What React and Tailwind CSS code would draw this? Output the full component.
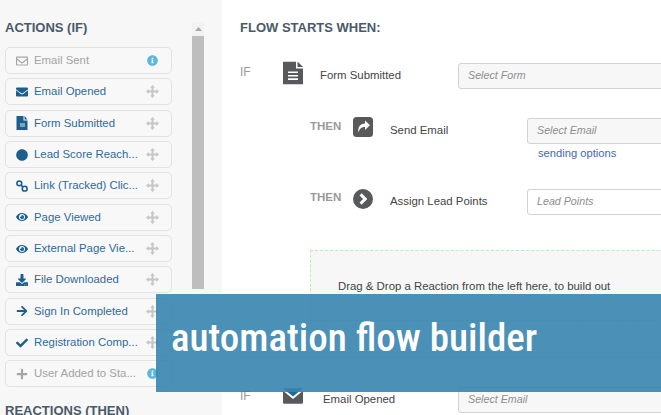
import React from "react";
import { FaRegEnvelope, FaEnvelope, FaCircle, FaEye, FaDownload, FaArrowRight, FaCheck, FaPlus, FaInfoCircle } from "react-icons/fa";

// glyphs that the icon sets only get roughly right
function DocIcon({ className }) {
  return (
    <svg viewBox="0 0 20 23" className={className}>
      <path d="M0 0H13V7H20V23H0Z" fill="currentColor" />
      <path d="M14.5 0L20 5.5H14.5Z" fill="currentColor" />
      <path d="M5 10H15V11.6H5ZM5 13.4H15V15H5ZM5 16.8H15V18.4H5Z" fill="#fff" />
    </svg>
  );
}

function SmallDocIcon() {
  return (
    <svg viewBox="0 0 12 14" className="h-[14px] w-[12px]">
      <path d="M0.5 0H7.5V4.5H11.5V14H0.5Z" fill="currentColor" />
      <path d="M8.5 0L11.5 3.5H8.5Z" fill="currentColor" />
      <path d="M4 7H9V11H4Z" fill="#7fa3bf" />
    </svg>
  );
}

function ChainIcon() {
  return (
    <svg viewBox="0 0 13 13" className="h-[12px] w-[12px]" fill="none" stroke="currentColor" strokeWidth="1.7">
      <circle cx="3.6" cy="3.6" r="2.6" />
      <circle cx="9.4" cy="9.4" r="2.6" />
      <path d="M5.5 5.5L7.5 7.5" />
    </svg>
  );
}

function MoveIcon() {
  return (
    <svg viewBox="0 0 14 14" className="h-[13px] w-[13px]" fill="currentColor">
      <path d="M7 0L9.6 2.9H8.1V5.9H11.1V4.4L14 7L11.1 9.6V8.1H8.1V11.1H9.6L7 14L4.4 11.1H5.9V8.1H2.9V9.6L0 7L2.9 4.4V5.9H5.9V2.9H4.4Z" />
    </svg>
  );
}

function ShareIcon({ className }) {
  return (
    <svg viewBox="0 0 20 20" className={className}>
      <rect width="20" height="20" rx="3.5" fill="currentColor" />
      <path d="M12 3.5L17 8.3L12 13V10C8.5 10 6.6 11.5 5.6 15.5C4.5 10.5 6.8 6.6 12 6.4Z" fill="#fff" />
    </svg>
  );
}

function ChevronCircleIcon({ className }) {
  return (
    <svg viewBox="0 0 20 20" className={className}>
      <circle cx="10" cy="10" r="10" fill="currentColor" />
      <path d="M7.6 5.4L12.2 10L7.6 14.6" fill="none" stroke="#fff" strokeWidth="3" />
    </svg>
  );
}

function BigEnvelopeIcon({ className }) {
  return (
    <svg viewBox="0 0 23 18" className={className}>
      <path d="M0 0H23L11.5 9.5Z" fill="#1f6a99" />
      <path d="M0 3L11.5 12.5L23 3V16.5Q23 18 21.5 18H1.5Q0 18 0 16.5Z" fill="currentColor" />
    </svg>
  );
}

const actions = [
  { label: "Email Sent", icon: <FaRegEnvelope />, off: true },
  { label: "Email Opened", icon: <FaEnvelope /> },
  { label: "Form Submitted", icon: <SmallDocIcon /> },
  { label: "Lead Score Reach...", icon: <FaCircle /> },
  { label: "Link (Tracked) Clic...", icon: <ChainIcon /> },
  { label: "Page Viewed", icon: <FaEye /> },
  { label: "External Page Vie...", icon: <FaEye /> },
  { label: "File Downloaded", icon: <FaDownload /> },
  { label: "Sign In Completed", icon: <FaArrowRight /> },
  { label: "Registration Comp...", icon: <FaCheck /> },
  { label: "User Added to Sta...", icon: <FaPlus />, off: true },
];

function ActionRow({ label, icon, off }) {
  return (
    <div className="flex h-[27px] items-center rounded-[5px] border border-[#e2e2e2] bg-[#f8f8f8] pl-[10px] pr-[12px]">
      <span className={`flex w-[18px] shrink-0 justify-start text-[12px] ${off ? "text-[#a5a5a5]" : "text-[#1c5f8e]"}`}>
        {icon}
      </span>
      <span className={`flex-1 whitespace-nowrap text-[11.4px] ${off ? "text-[#a3a3a3]" : "text-[#2f6a99]"}`}>{label}</span>
      {off ? (
        <FaInfoCircle className="mr-[1px] text-[11px] text-[#5bb8dc]" />
      ) : (
        <span className="text-[#c6c6c6]">
          <MoveIcon />
        </span>
      )}
    </div>
  );
}

function SelectBox({ text, white }) {
  return (
    <div
      className={`flex h-[26px] w-[300px] shrink-0 items-center rounded-[3px] border border-[#d2d2d2] pb-[2px] pl-[9px] text-[10.7px] italic text-[#8e8e8e] ${
        white ? "bg-white" : "bg-[#f7f7f7]"
      }`}
    >
      {text}
    </div>
  );
}

function FlowRow({ tag, icon, label, labelWidth, tagClass, select, className }) {
  return (
    <div className={`flex h-[26px] items-center ${className}`}>
      <span className={`w-[43px] shrink-0 -translate-y-[4px] ${tagClass}`}>{tag}</span>
      <span className="flex w-[20px] shrink-0 justify-start text-[#58595b]">{icon}</span>
      <span className={`ml-[17px] shrink-0 whitespace-nowrap text-[11.4px] text-[#444] ${labelWidth}`}>{label}</span>
      {select}
    </div>
  );
}

export default function App() {
  return (
    <div className="relative flex h-[415px] w-[661px] overflow-hidden bg-white font-['Liberation_Sans',sans-serif]">
      {/* Left panel */}
      <aside className="flex h-full w-[222px] shrink-0 bg-[#f7f7f7]">
        <div className="w-[172px] shrink-0 pl-[5px] pt-[19px]">
          <h2 className="h-[28px] whitespace-nowrap text-[13px] font-bold leading-[17px] text-[#4a5a6a]">ACTIONS (IF)</h2>
          <div className="flex w-[167px] flex-col gap-[4.35px]">
            {actions.map((a) => (
              <ActionRow key={a.label} {...a} />
            ))}
          </div>
          <h2 className="mt-[15px] whitespace-nowrap text-[13px] font-bold leading-[17px] text-[#4a5a6a]">REACTIONS (THEN)</h2>
        </div>
        {/* Scrollbar */}
        <div className="ml-[20px] mt-[22px] flex h-[267px] w-[12px] flex-col">
          <div className="flex h-[14px] items-center justify-center bg-[#f2f2f2]">
            <svg width="7" height="4" viewBox="0 0 7 4"><path d="M3.5 0L7 4H0z" fill="#a8a8a8" /></svg>
          </div>
          <div className="flex-1 bg-[#bebebe]" />
        </div>
      </aside>

      {/* Flow builder */}
      <main className="min-w-0 flex-1 pl-[18px] pt-[19px]">
        <h2 className="whitespace-nowrap text-[13px] font-bold leading-[17px] text-[#4a5a6a]">FLOW STARTS WHEN:</h2>

        <FlowRow
          className="mt-[27px]"
          tag="IF"
          tagClass="text-[12px] text-[#9a9a9a]"
          icon={<DocIcon className="h-[23px] w-[20px] -translate-y-[3.5px]" />}
          label="Form Submitted"
          labelWidth="w-[138px]"
          select={<SelectBox text="Select Form" />}
        />

        <FlowRow
          className="ml-[70px] mt-[29px]"
          tag="THEN"
          tagClass="text-[11.5px] font-bold text-[#9a9a9a]"
          icon={<ShareIcon className="h-[20px] w-[20px] -translate-y-[4px]" />}
          label="Send Email"
          labelWidth="w-[137px]"
          select={<SelectBox text="Select Email" />}
        />
        <div className="ml-[298px] mt-[2px] h-[14px] whitespace-nowrap text-[11.2px] leading-[14px] text-[#4269b3]">sending options</div>

        <FlowRow
          className="ml-[70px] mt-[29px]"
          tag="THEN"
          tagClass="text-[11.5px] font-bold text-[#9a9a9a]"
          icon={<ChevronCircleIcon className="h-[20px] w-[20px] -translate-y-[3px]" />}
          label="Assign Lead Points"
          labelWidth="w-[137px]"
          select={<SelectBox text="Lead Points" white />}
        />

        <div className="ml-[70px] mt-[35px] h-[71px] w-[400px] border border-dashed border-[#b5f0b5] bg-[#f7f7f7] pl-[27px] pt-[28px] text-[11.4px] leading-[14px] text-[#444]">
          Drag &amp; Drop a Reaction from the left here, to build out
        </div>

        <div className="ml-[-1px] mt-[36px] h-px w-[440px] bg-[#dcdcdc]" />

        <FlowRow
          className="mt-[29px]"
          tag="IF"
          tagClass="text-[12px] text-[#9a9a9a]"
          icon={<BigEnvelopeIcon className="h-[18px] w-[23px] max-w-none -translate-y-[4px]" />}
          label="Email Opened"
          labelWidth="w-[138px] pl-[3px]"
          select={<SelectBox text="Select Email" />}
        />
      </main>

      {/* Caption banner over the screenshot */}
      <div className="absolute bottom-[23px] left-[156px] right-0 flex h-[98px] items-center bg-[#3784ae]/90 pb-[10px] pl-[15px]">
        <span className="whitespace-nowrap font-['Roboto_Condensed','Liberation_Sans_Narrow','Roboto',sans-serif] text-[39px] font-medium text-white">automation flow builder</span>
      </div>
    </div>
  );
}
